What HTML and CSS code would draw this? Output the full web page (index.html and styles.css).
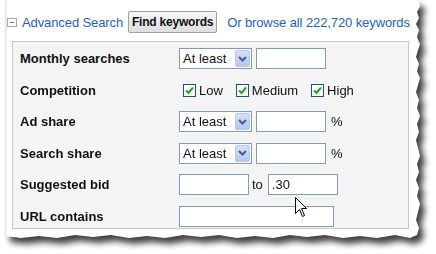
FILE: index.html
```html
<!DOCTYPE html>
<html>

<head>
    <title>Keyword Tool - Advanced Search</title>
    <link rel="stylesheet" href="styles.css">
</head>

<body>
    <div class="frame">
        <div class="sheet">
            <div class="topbar">
                <span class="toggle"></span>
                <a class="link" href="#">Advanced Search</a>
                <button class="find">Find keywords</button>
                <a class="link browse" href="#">Or browse all 222,720 keywords</a>
            </div>
            <div class="panel">
                <div class="row">
                    <span class="label">Monthly searches</span>
                    <div class="controls">
                        <div class="combo"><span>At least</span><span class="drop"><svg width="9" height="6" viewBox="0 0 9 6"><path d="M1 1 L4.5 4.5 L8 1" fill="none" stroke="#4a5d85" stroke-width="2"/></svg></span></div>
                        <input class="box" type="text">
                    </div>
                </div>
                <div class="row">
                    <span class="label">Competition</span>
                    <div class="controls checks">
                        <span class="check"><span class="tick"><svg width="11" height="11" viewBox="0 0 11 11"><path d="M2 5.5 L4.5 8 L9 2.5" fill="none" stroke="#21a321" stroke-width="2"/></svg></span>Low</span>
                        <span class="check"><span class="tick"><svg width="11" height="11" viewBox="0 0 11 11"><path d="M2 5.5 L4.5 8 L9 2.5" fill="none" stroke="#21a321" stroke-width="2"/></svg></span>Medium</span>
                        <span class="check"><span class="tick"><svg width="11" height="11" viewBox="0 0 11 11"><path d="M2 5.5 L4.5 8 L9 2.5" fill="none" stroke="#21a321" stroke-width="2"/></svg></span>High</span>
                    </div>
                </div>
                <div class="row">
                    <span class="label">Ad share</span>
                    <div class="controls">
                        <div class="combo"><span>At least</span><span class="drop"><svg width="9" height="6" viewBox="0 0 9 6"><path d="M1 1 L4.5 4.5 L8 1" fill="none" stroke="#4a5d85" stroke-width="2"/></svg></span></div>
                        <input class="box" type="text">
                        <span class="unit">%</span>
                    </div>
                </div>
                <div class="row">
                    <span class="label">Search share</span>
                    <div class="controls">
                        <div class="combo"><span>At least</span><span class="drop"><svg width="9" height="6" viewBox="0 0 9 6"><path d="M1 1 L4.5 4.5 L8 1" fill="none" stroke="#4a5d85" stroke-width="2"/></svg></span></div>
                        <input class="box" type="text">
                        <span class="unit">%</span>
                    </div>
                </div>
                <div class="row">
                    <span class="label">Suggested bid</span>
                    <div class="controls">
                        <input class="box" type="text">
                        <span class="to">to</span>
                        <input class="box" type="text" value=".30">
                    </div>
                </div>
                <div class="row">
                    <span class="label">URL contains</span>
                    <div class="controls">
                        <input class="box wide" type="text">
                    </div>
                </div>
            </div>
        </div>
    </div>

    <!-- mouse pointer over the bid field -->
    <svg class="cursor" width="13" height="21" viewBox="0 0 13 21">
        <path d="M0.5 0.5 L0.5 16.5 L4.5 12.5 L7.5 19.5 L9.5 18.5 L6.5 11.5 L11.5 11.5 Z" fill="#fff" stroke="#000" stroke-width="1"/>
    </svg>
</body>

</html>
```

FILE: styles.css
```css
body {
    margin: 0;
    width: 436px;
    height: 254px;
    overflow: hidden;
    background-color: white;
    font-family: "Liberation Sans", Arial, sans-serif;
    font-size: 13px;
    color: #111;
}

.frame {
    margin-left: 5px;
    width: 416px;
    filter: drop-shadow(5px 6px 3px rgba(0, 0, 0, 0.75));
}

.sheet {
    height: 240px;
    background-color: white;
    border-left: 2px solid #ececec;
    box-sizing: border-box;
    clip-path: polygon(0 0, 413px 0, 415px 6px, 412px 12px, 414px 18px, 411px 24px, 414px 30px, 412px 37px, 415px 44px, 413px 50px, 411px 57px, 414px 64px, 412px 71px, 415px 78px, 413px 85px, 411px 92px, 414px 100px, 412px 108px, 415px 116px, 412px 124px, 414px 132px, 411px 140px, 413px 148px, 415px 156px, 412px 164px, 414px 172px, 411px 180px, 414px 188px, 412px 196px, 415px 204px, 413px 212px, 411px 220px, 414px 228px, 412px 235px, 405px 238px, 390px 235px, 372px 238px, 355px 236px, 338px 238px, 320px 235px, 302px 237px, 285px 235px, 268px 238px, 250px 236px, 232px 238px, 214px 235px, 196px 237px, 178px 235px, 160px 238px, 142px 236px, 124px 238px, 106px 235px, 88px 237px, 70px 235px, 52px 238px, 34px 236px, 16px 238px, 0 236px);
}

.topbar {
    display: flex;
    align-items: center;
    height: 22px;
    padding-top: 11px;
    white-space: nowrap;
}

.toggle {
    width: 8px;
    height: 7px;
    border: 1px solid #a8a8a8;
    margin-right: 5px;
    position: relative;
    background-color: #fafafa;
}

.toggle::after {
    content: "";
    position: absolute;
    left: 2px;
    top: 3px;
    width: 4px;
    height: 1px;
    background-color: #777;
}

.link {
    color: #1c62d2;
    text-decoration: none;
    letter-spacing: -0.1px;
}

.find {
    margin-left: 5px;
    height: 22px;
    width: 89px;
    padding: 0;
    white-space: nowrap;
    font-family: "Liberation Sans", Arial, sans-serif;
    font-size: 12px;
    letter-spacing: -0.2px;
    font-weight: bold;
    color: #111;
    background: linear-gradient(#f6f6f6, #dedede);
    border: 1px solid #a0a0a0;
    border-radius: 2px;
}

.browse {
    margin-left: 10px;
}

.panel {
    margin-top: 8px;
    margin-left: 5px;
    width: 397px;
    height: 188px;
    padding-top: 1px;
    box-sizing: border-box;
    background-color: #f4f4f4;
    border: 1px solid #c8c8c8;
}

.row {
    display: flex;
    align-items: center;
    height: 31.5px;
}

.label {
    width: 159px;
    padding-left: 7px;
    font-weight: bold;
}

.controls {
    display: flex;
    align-items: center;
    gap: 4px;
}

.combo {
    display: flex;
    align-items: center;
    justify-content: space-between;
    box-sizing: border-box;
    width: 73px;
    height: 21px;
    padding: 1px 1px 1px 3px;
    background-color: white;
    border: 1px solid #7f9db9;
}

.drop {
    display: flex;
    align-items: center;
    justify-content: center;
    width: 15px;
    height: 17px;
    box-sizing: border-box;
    border: 1px solid #b8c8f2;
    border-radius: 2px;
    background: linear-gradient(#d6e0fb, #b5c6f4);
}

.box {
    box-sizing: border-box;
    width: 70px;
    height: 21px;
    margin: 0;
    padding: 1px 3px;
    border: 1px solid #7f9db9;
    background-color: white;
    font-family: "Liberation Sans", Arial, sans-serif;
    font-size: 13px;
    color: #111;
    outline: none;
}

.box.wide {
    width: 155px;
}

.unit {
    margin-left: 1px;
}

.to {
    margin: 0 1px 0 -1px;
}

.checks {
    padding-left: 4px;
    gap: 13px;
}

.check {
    display: flex;
    align-items: center;
    gap: 3px;
}

.tick {
    display: flex;
    align-items: center;
    justify-content: center;
    width: 13px;
    height: 13px;
    box-sizing: border-box;
    border: 1px solid #1c5180;
    background-color: white;
}

.cursor {
    position: absolute;
    left: 295px;
    top: 197px;
}
```
